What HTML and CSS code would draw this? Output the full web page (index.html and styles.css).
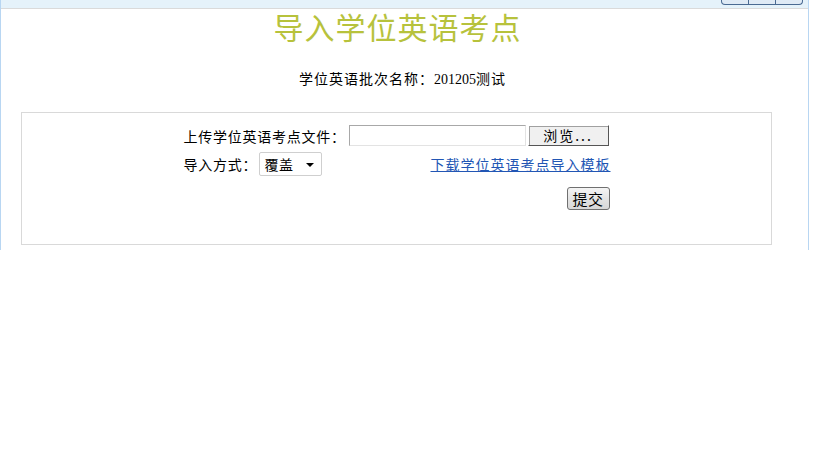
FILE: index.html
```html
<!DOCTYPE html>
<html lang="zh-CN">
<head>
<meta charset="utf-8">
<title>导入学位英语考点</title>
<link rel="stylesheet" href="styles.css">
</head>
<body>
<div class="frame">
  <div class="topbar">
    <div class="winbtns"><span></span><span></span><span></span></div>
  </div>
  <h1 class="title">导入学位英语考点</h1>
  <p class="batch">学位英语批次名称：<span class="num">201205</span>测试</p>
  <div class="box">
    <div class="form">
      <div class="row">
        <span class="label">上传学位英语考点文件：</span>
        <span class="file"></span>
        <span class="browse">浏览...</span>
      </div>
      <div class="row row2">
        <span class="label">导入方式：</span>
        <span class="select">覆盖<i class="caret"></i></span>
        <a class="link" href="#">下载学位英语考点导入模板</a>
      </div>
      <div class="row row3">
        <span class="submit">提交</span>
      </div>
    </div>
  </div>
</div>
</body>
</html>
```

FILE: styles.css
```css
html, body {
  margin: 0;
  padding: 0;
  background: #ffffff;
  font-family: "Noto Sans CJK SC", "Liberation Sans", sans-serif;
  font-size: 14px;
  color: #000;
}
.frame {
  width: 807px;
  height: 250px;
  border-left: 1px solid #b8d6f2;
  border-right: 1px solid #b8d6f2;
}
.topbar {
  height: 8px;
  background: #e5f2fa;
  border-bottom: 1px solid #dadada;
  display: flex;
  justify-content: flex-end;
  padding-right: 5px;
}
.winbtns {
  display: flex;
  height: 4px;
  border: 1px solid #4a6a92;
  border-top: none;
  border-radius: 0 0 4px 4px;
  background: #dfeaf5;
  overflow: hidden;
}
.winbtns span {
  width: 26px;
  border-left: 1px solid #4a6a92;
}
.winbtns span:first-child { border-left: none; }
.title {
  margin: -1px 14px 0 0;
  text-align: center;
  font-size: 30px;
  line-height: 36px;
  font-weight: normal;
  color: #b7c23c;
  letter-spacing: 1px;
}
.batch {
  margin: 24px 0 0 0;
  text-align: center;
  font-size: 14px;
  line-height: 20px;
  letter-spacing: 1px;
  padding-right: 4px;
}
.num {
  font-family: "Liberation Serif", serif;
  letter-spacing: 0;
}
.box {
  margin: 22px 0 0 20px;
  width: 749px;
  height: 131px;
  border: 1px solid #d9d9d9;
}
.form {
  width: 426px;
  margin: 12px auto 0 auto;
}
.row {
  display: flex;
  align-items: center;
  height: 21px;
}
.label {
  width: 165px;
  white-space: nowrap;
  letter-spacing: 0.75px;
}
.file {
  width: 175px;
  height: 19px;
  border: 1px solid #a8a8a8;
  border-right-color: #e3e3e3;
  border-bottom-color: #e3e3e3;
  background: #fff;
}
.browse {
  margin-left: 2px;
  width: 79px;
  height: 19px;
  box-sizing: content-box;
  background: #f0f0f0;
  border: 1px solid #fff;
  border-right-color: #555;
  border-bottom-color: #555;
  box-shadow: 1px 1px 0 #a0a0a0 inset;
  text-align: center;
  line-height: 19px;
  letter-spacing: 2px;
}
.row2 {
  margin-top: 6px;
  height: 24px;
}
.row2 .label {
  width: 75px;
}
.select {
  border: 1px solid #cfcfcf;
  border-radius: 2px;
  display: flex;
  align-items: center;
  padding-left: 5px;
  box-sizing: border-box;
  width: 63px;
  height: 24px;
  position: relative;
  letter-spacing: 0.5px;
}
.caret {
  position: absolute;
  right: 7px;
  top: 10px;
  width: 0;
  height: 0;
  border-left: 4px solid transparent;
  border-right: 4px solid transparent;
  border-top: 4px solid #000;
}
.link {
  margin-left: auto;
  color: #2256b4;
  text-decoration: underline;
  letter-spacing: 1px;
  margin-right: -1px;
}
.row3 {
  margin-top: 11px;
  height: 23px;
  justify-content: flex-end;
}
.submit {
  width: 41px;
  height: 21px;
  border: 1px solid #707070;
  border-radius: 3px;
  background: linear-gradient(#f4f4f4, #e4e4e4 50%, #d8d8d8);
  text-align: center;
  line-height: 21px;
  font-size: 15px;
  letter-spacing: 0.5px;
}
```
